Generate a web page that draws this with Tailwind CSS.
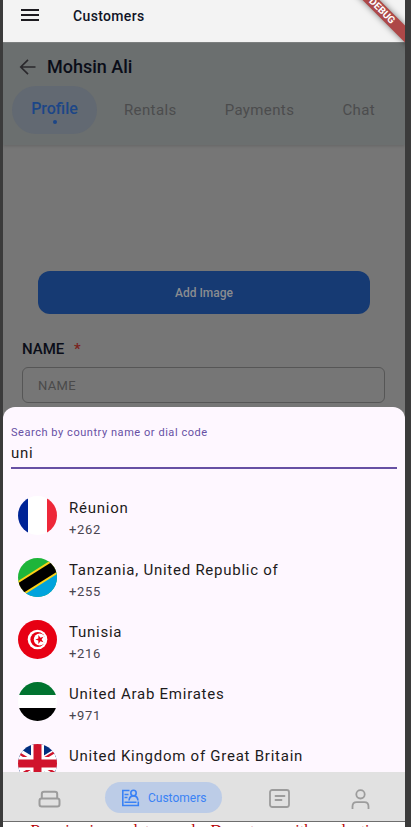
<!DOCTYPE html>
<html lang="en">
<head>
<meta charset="utf-8">
<meta name="viewport" content="width=device-width, initial-scale=1">
<title>Customers</title>
<script src="https://cdn.jsdelivr.net/npm/@tailwindcss/browser@4"></script>
</head>
<body class="h-screen overflow-hidden bg-[#3b3b3b] pl-[3px] pr-[6px] font-['Roboto',sans-serif]">
<div class="relative flex h-full flex-col overflow-hidden bg-white">

  <header class="flex h-[42px] shrink-0 items-start bg-[#f3f3f3] pl-4 pt-1">
    <button type="button" aria-label="Open menu" class="flex h-[22px] w-[22px] items-center justify-center">
      <svg width="22" height="22" viewBox="0 0 22 22" fill="none" stroke="#1d1b20" stroke-width="2"><path d="M2 6h18M2 11h18M2 16h18"/></svg>
    </button>
    <h1 class="ml-8 text-sm leading-6 font-medium tracking-wide text-[#101426]">Customers</h1>
  </header>

  <div class="pointer-events-none absolute right-0 top-0 z-20 size-[60px] overflow-hidden">
    <div class="absolute -right-8 top-[5px] w-[110px] rotate-45 bg-[#ad4848] text-center text-[10px] leading-[12px] font-bold text-white shadow-[0_0_6px_rgba(0,0,0,0.5)]">DEBUG</div>
  </div>

  <main class="relative min-h-0 flex-1 overflow-hidden bg-[#767676]">
    <section class="h-[103px] border-t border-[#7c7f7f] bg-[#6b6f6f] pt-3 shadow-[0_1px_3px_rgba(0,0,0,0.15)]">
      <div class="flex h-6 items-center pl-4">
        <button type="button" aria-label="Back" class="flex h-6 w-[18px] items-center justify-center">
          <svg class="shrink-0" width="18" height="18" viewBox="0 0 18 18" fill="none" stroke="#2a282c" stroke-width="1.700"><path d="M16.500 9H2.200M9 1.800 1.800 9 9 16.200"/></svg>
        </button>
        <h2 class="ml-[10px] text-lg leading-6 font-medium text-[#0a0d18]">Mohsin Ali</h2>
      </div>
      <nav class="mt-[7px] flex h-12 items-center pl-[9px] pr-[30px] text-[15px] leading-5 tracking-wide text-[#4b4c4d]">
        <a href="#profile" class="flex h-12 w-[85px] flex-col items-center justify-end gap-[1px] rounded-full bg-[#626972] pb-[10px] text-base leading-5 font-medium tracking-normal text-[#1c4687]">Profile<span class="size-1 rounded-full bg-[#1c4687]"></span></a>
        <div class="flex flex-1 justify-between pl-[27px]">
          <a href="#rentals">Rentals</a>
          <a href="#payments">Payments</a>
          <a href="#chat">Chat</a>
        </div>
      </nav>
    </section>

    <form class="pt-[126px]">
      <div class="px-[35px]">
        <button type="button" class="h-[43px] w-full rounded-xl bg-[#163a73] text-xs font-medium text-[#8a8c90]">Add Image</button>
      </div>
      <div class="pl-[19px] pr-5 pt-[25px]">
        <label for="name" class="block text-[15px] leading-5 font-medium text-[#0a0d18]">NAME <span class="ml-[6px] text-[#7b221c]">*</span></label>
        <input id="name" type="text" placeholder="NAME" class="mt-2 block h-9 w-full rounded-md border border-[#565656] bg-transparent px-[15px] text-[13px] tracking-wide placeholder:text-[#4a4a4a]">
      </div>
    </form>

    <section class="absolute inset-x-0 bottom-0 top-[365px] overflow-hidden rounded-t-xl bg-[#fef7ff]">
      <div class="px-2 pt-[18px]">
        <label for="search" class="block text-[11px] leading-4 tracking-wider text-[#6750a4]">Search by country name or dial code</label>
        <input id="search" type="text" value="uni" class="block h-7 w-full border-b-2 border-[#6750a4] bg-transparent pb-[2px] text-[15px] tracking-wider text-[#1d1b20] outline-none">
      </div>
      <ul class="pt-[15px]">
        <li class="flex h-[62px] items-center gap-3 pl-[15px]">
          <svg class="shrink-0 rounded-full" width="39" height="39" viewBox="0 0 39 39"><path fill="#fff" d="M0 0h39v39H0z"/><path fill="#002496" d="M0 0h10v39H0z"/><path fill="#ee2839" d="M29 0h10v39H29z"/></svg>
          <div class="pt-2"><p class="text-[15px] leading-[22px] tracking-wider text-[#1d1b20]">Réunion</p><p class="text-[13px] leading-[22px] tracking-wider text-[#49454f]">+262</p></div>
        </li>
        <li class="flex h-[62px] items-center gap-3 pl-[15px]">
          <svg class="shrink-0 rounded-full" width="39" height="39" viewBox="0 0 39 39"><path fill="#1eb53a" d="M0 0h39v39H0z"/><path fill="#00a3dd" d="M39 8v31H-8z"/><path stroke="#fcd116" stroke-width="15" d="M-5 35 44 4"/><path stroke="#000" stroke-width="11" d="M-5 35 44 4"/></svg>
          <div class="pt-2"><p class="text-[15px] leading-[22px] tracking-wider text-[#1d1b20]">Tanzania, United Republic of</p><p class="text-[13px] leading-[22px] tracking-wider text-[#49454f]">+255</p></div>
        </li>
        <li class="flex h-[62px] items-center gap-3 pl-[15px]">
          <svg class="shrink-0 rounded-full" width="39" height="39" viewBox="0 0 39 39"><path fill="#e70013" d="M0 0h39v39H0z"/><circle cx="19.500" cy="19.500" r="9.800" fill="#fff"/><circle cx="19.800" cy="19.500" r="7.400" fill="#e70013"/><circle cx="21.700" cy="19.500" r="5.900" fill="#fff"/><path fill="#e70013" d="m17.300 19.500 3-1.100.1-3.300 2 2.600 3-.9-1.800 2.700 1.800 2.700-3-.9-2 2.600-.1-3.300z"/></svg>
          <div class="pt-2"><p class="text-[15px] leading-[22px] tracking-wider text-[#1d1b20]">Tunisia</p><p class="text-[13px] leading-[22px] tracking-wider text-[#49454f]">+216</p></div>
        </li>
        <li class="flex h-[62px] items-center gap-3 pl-[15px]">
          <svg class="shrink-0 rounded-full" width="39" height="39" viewBox="0 0 39 39"><path fill="#fff" d="M0 0h39v39H0z"/><path fill="#00732f" d="M0 0h39v13H0z"/><path fill="#000" d="M0 26h39v13H0z"/></svg>
          <div class="pt-2"><p class="text-[15px] leading-[22px] tracking-wider text-[#1d1b20]">United Arab Emirates</p><p class="text-[13px] leading-[22px] tracking-wider text-[#49454f]">+971</p></div>
        </li>
        <li class="flex h-[62px] items-center gap-3 pl-[15px]">
          <svg class="shrink-0 rounded-full" width="39" height="39" viewBox="0 0 39 39"><path fill="#012f7f" d="M0 0h39v39H0z"/><path stroke="#fff" stroke-width="7" d="M-6 4 45 35M-6 35 45 4"/><path stroke="#d0142c" stroke-width="2.400" d="M-6 5 19.500 20.500M19.500 18.500 45 3M-6 36 19.500 20.500M19.500 18.500 45 34"/><path fill="#fff" d="M13 0h13v39H13zM0 13h39v13H0z"/><path fill="#d0142c" d="M15.500 0h8v39h-8zM0 15.500h39v8H0z"/></svg>
          <div class="pt-2"><p class="text-[15px] leading-[22px] tracking-wider text-[#1d1b20]">United Kingdom of Great Britain</p><p class="text-[13px] leading-[22px] tracking-wider text-[#49454f]">+44</p></div>
        </li>
      </ul>
    </section>
  </main>

  <nav class="flex h-[50px] shrink-0 items-center justify-between border-b border-[#6e6e6e] bg-[#e1e1e1] px-[35px] pt-[2px]">
    <div class="flex items-center gap-11">
      <a href="#home" aria-label="Rentals" class="pt-[2px]">
        <svg width="23" height="18" viewBox="0 0 23 18" fill="none" stroke="#9c9c9c" stroke-width="2"><rect x="1.500" y="8.500" width="20" height="8" rx="2.200"/><path d="M3.800 8.500V4c0-1.500.8-2.200 2.200-2.200h11c1.400 0 2.200.7 2.200 2.200v4.500"/></svg>
      </a>
      <a href="#customers" class="flex h-[31px] w-[117px] items-center gap-2 rounded-full bg-[#bccce7] pl-4 text-xs text-[#3a82f5]">
        <svg width="19" height="18" viewBox="0 0 19 18" fill="none" stroke="#3a82f5" stroke-width="1.600"><path d="M8.500 1.500H1.800v15h15.500v-4M3.500 5.500h4M3.500 8.500h3M3.500 13.300h12"/><circle cx="12.500" cy="4" r="2.700"/><path d="M8 11.500c.3-3 1.800-4.600 4.500-4.600s4.200 1.600 4.500 4.600"/></svg>
        Customers
      </a>
    </div>
    <div class="flex items-center gap-[61px]">
      <a href="#notes" aria-label="Notes" class="pt-[2px]">
        <svg width="21" height="19" viewBox="0 0 21 19" fill="none" stroke="#9c9c9c" stroke-width="1.800"><rect x="1" y="1" width="19" height="17" rx="2.200"/><path stroke-linecap="round" d="M6.500 7h9M6.500 11h6"/></svg>
      </a>
      <a href="#account" aria-label="Account" class="pt-[2px]">
        <svg width="19" height="20" viewBox="0 0 19 20" fill="none" stroke="#9c9c9c" stroke-width="1.800"><circle cx="9.500" cy="5.300" r="4.200"/><path d="M1.500 20v-2.500c0-2.700 1.500-4.300 4.200-4.300h7.600c2.700 0 4.200 1.600 4.200 4.300V20"/></svg>
      </a>
    </div>
  </nav>

  <div class="h-[5px] shrink-0 overflow-hidden bg-white">
    <p class="pl-2 text-center font-['Liberation_Serif',serif] text-base leading-[18px] text-[#b50000]">Running in emulator mode. Do not use with production credentials.</p>
  </div>
</div>
</body>
</html>
